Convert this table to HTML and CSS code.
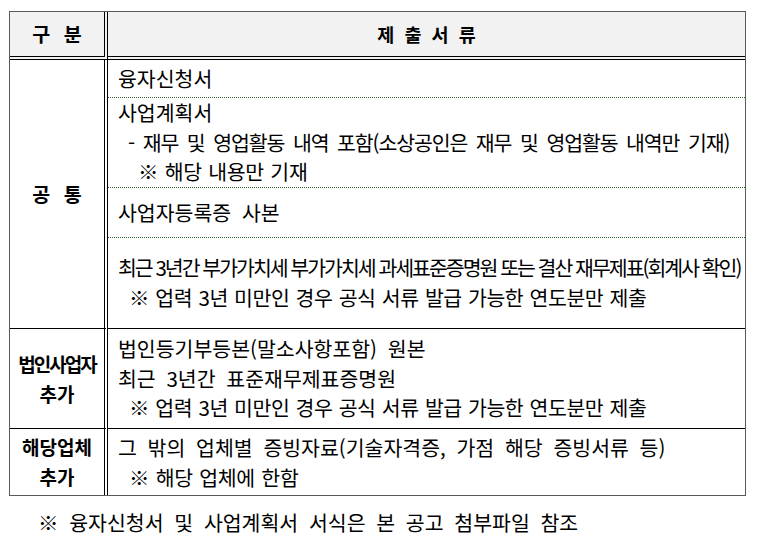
FILE: index.html
```html
<!DOCTYPE html>
<html lang="ko">
<head>
<meta charset="utf-8">
<link rel="stylesheet" href="styles.css">
</head>
<body>
<div class="tbl">
  <div class="c1 head wide">구 분</div>
  <div class="c2 head">제 출 서 류</div>

  <div class="c1 label span4">공 통</div>
  <div class="c2 sub s1 dotted"><div class="ln">융자신청서</div></div>
  <div class="c2 sub s2 dotted">
    <div class="ln">사업계획서</div>
    <div class="ln i1 tight1">- 재무 및 영업활동 내역 포함(소상공인은 재무 및 영업활동 내역만 기재)</div>
    <div class="ln i2">※ 해당 내용만 기재</div>
  </div>
  <div class="c2 sub s3 dotted"><div class="ln">사업자등록증 사본</div></div>
  <div class="c2 sub s4 solid">
    <div class="ln tight2">최근 3년간 부가가치세 부가가치세 과세표준증명원 또는 결산 재무제표(회계사 확인)</div>
    <div class="ln i3">※ 업력 3년 미만인 경우 공식 서류 발급 가능한 연도분만 제출</div>
  </div>

  <div class="c1 label r2 solid"><span class="narrow">법인사업자</span><span>추가</span></div>
  <div class="c2 sub r2 solid">
    <div class="ln">법인등기부등본(말소사항포함) 원본</div>
    <div class="ln">최근 3년간 표준재무제표증명원</div>
    <div class="ln i3">※ 업력 3년 미만인 경우 공식 서류 발급 가능한 연도분만 제출</div>
  </div>

  <div class="c1 label r3"><span>해당업체</span><span>추가</span></div>
  <div class="c2 sub r3">
    <div class="ln">그 밖의 업체별 증빙자료(기술자격증, 가점 해당 증빙서류 등)</div>
    <div class="ln i4">※ 해당 업체에 한함</div>
  </div>
</div>
<p class="note">※ 융자신청서 및 사업계획서 서식은 본 공고 첨부파일 참조</p>
</body>
</html>
```
FILE: styles.css
```css
html, body {
  margin: 0;
  padding: 0;
  background: #fff;
}
body {
  padding: 11px 0 0 9px;
  font-family: "Noto Sans CJK KR", "Noto Sans", sans-serif;
  font-size: 20.5px;
  color: #000;
}
.tbl {
  box-sizing: border-box;
  width: 737px;
  border: 1px solid #5a5a5a;
  display: grid;
  grid-template-columns: 98px 1fr;
  grid-template-rows: 48px 38px 90px 50px 91px 100px 66px;
}
.c1 {
  border-right: 4px double #000;
}
.head {
  background: #f2f2f2;
  border-bottom: 4px double #000;
  font-weight: bold;
  font-size: 18.5px;
  display: flex;
  align-items: center;
  justify-content: center;
  word-spacing: 5px;
  line-height: 1;
}
.head.wide {
  font-size: 19.5px;
  word-spacing: 8px;
}
.label {
  font-weight: bold;
  font-size: 19px;
  display: flex;
  flex-direction: column;
  align-items: center;
  justify-content: center;
  line-height: 30px;
}
.span4 {
  grid-row: 2 / span 4;
  border-bottom: 1px solid #000;
  font-size: 19.5px;
  word-spacing: 8px;
}
.narrow {
  letter-spacing: -2px;
}
.sub {
  display: flex;
  flex-direction: column;
  justify-content: center;
  padding-left: 10px;
  word-spacing: 5px;
  white-space: nowrap;
  line-height: 29.7px;
}
.dotted {
  border-bottom: 1px dotted #2e6b2e;
}
.solid {
  border-bottom: 1px solid #000;
}
.r3 .ln { line-height: 30px; }
.i1 { padding-left: 10px; }
.i2 {
  padding-left: 20px;
  word-spacing: 1px;
  letter-spacing: -0.3px;
}
.i3 {
  padding-left: 11px;
  word-spacing: 1px;
  letter-spacing: -0.45px;
}
.i4 {
  padding-left: 11px;
  word-spacing: 1px;
  letter-spacing: -0.3px;
}
.tight1 {
  letter-spacing: -1.1px;
  word-spacing: 4px;
}
.tight2 {
  letter-spacing: -2px;
  word-spacing: 0;
}
.note {
  margin: 13px 0 0 29px;
  word-spacing: 5px;
  line-height: 26px;
}
```
